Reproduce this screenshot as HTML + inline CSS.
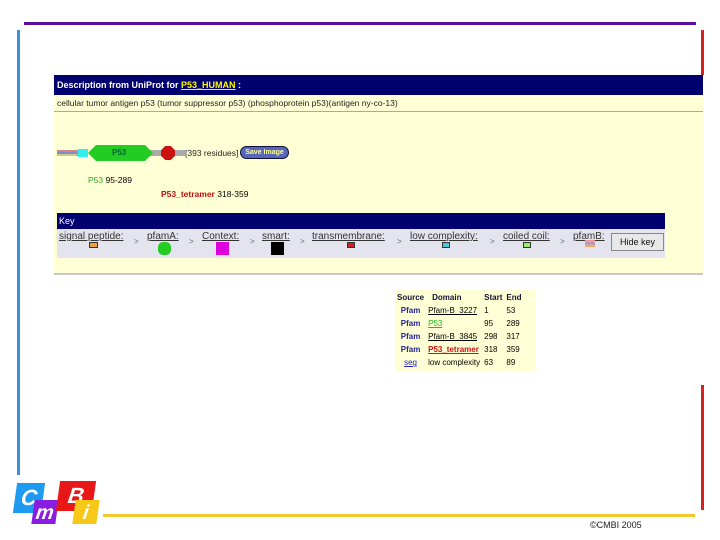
<!DOCTYPE html>
<html><head><style>
body{margin:0;width:720px;height:540px;background:#fff;position:relative;overflow:hidden;font-family:"Liberation Sans",Arial,sans-serif;}
.a{position:absolute}
.t{font-size:9px;white-space:nowrap}
.k{font-size:10px;color:#333;text-decoration:underline;position:absolute;top:231px;white-space:nowrap}
.g{font-size:8px;color:#666;position:absolute;top:237px}
td{font-size:8px;padding:0 2px;height:13px;white-space:nowrap}
</style></head><body>
<div class="a" style="left:24px;top:22px;width:672px;height:3px;background:#5a0fa0"></div>
<div class="a" style="left:17px;top:30px;width:3px;height:445px;background:#3b8fd8"></div>
<div class="a" style="left:701px;top:30px;width:3px;height:480px;background:#d82020"></div>
<div class="a" style="left:54px;top:75px;width:650px;height:310px;background:#fff"></div>
<div class="a" style="left:54px;top:75px;width:649px;height:200px;background:#ffffd6"></div>
<div class="a" style="left:54px;top:273px;width:649px;height:2px;background:#c8c8c8"></div>
<div class="a" style="left:54px;top:75px;width:649px;height:20px;background:#00006e"></div>
<div class="a t" style="left:57px;top:80px;color:#fff;font-weight:bold">Description from UniProt for <span style="color:#ff0;text-decoration:underline">P53_HUMAN</span> :</div>
<div class="a t" style="left:57px;top:98px;color:#222;font-size:8.5px">cellular tumor antigen p53 (tumor suppressor p53) (phosphoprotein p53)(antigen ny-co-13)</div>
<div class="a" style="left:54px;top:111px;width:649px;height:1px;background:#aaa"></div>
<!-- protein -->
<div class="a" style="left:57px;top:150px;width:20px;height:6px;background:linear-gradient(#c88 0,#c88 33%,#88c 33%,#88c 66%,#cc8 66%)"></div>
<div class="a" style="left:77px;top:150px;width:10px;height:6px;background:#999"></div>
<div class="a" style="left:78px;top:149px;width:10px;height:8px;background:#3ee"></div>
<div class="a" style="left:95px;top:150px;width:90px;height:6px;background:#aaa"></div>
<div class="a" style="left:88px;top:145px;width:65px;height:16px;background:#2c2;clip-path:polygon(8px 0,57px 0,100% 50%,57px 100%,8px 100%,0 50%)"></div>
<div class="a t" style="left:112px;top:148px;font-size:8px;font-weight:bold;color:#063">P53</div>
<div class="a" style="left:161px;top:146px;width:14px;height:14px;background:#c11;clip-path:polygon(30% 0,70% 0,100% 30%,100% 70%,70% 100%,30% 100%,0 70%,0 30%)"></div>
<div class="a t" style="left:185px;top:148px;font-size:8.5px;color:#222">[393 residues]</div>
<div class="a" style="left:240px;top:146px;width:47px;height:11px;background:#5566bb;border:1px solid #113;border-radius:7px;color:#ff9;font-size:7px;font-weight:bold;text-align:center;line-height:11px">Save Image</div>
<div class="a t" style="left:88px;top:175px;font-size:8.5px"><span style="color:#2a2">P53</span> 95-289</div>
<div class="a t" style="left:161px;top:189px;font-size:8.5px"><b style="color:#b11">P53_tetramer</b> 318-359</div>
<!-- key -->
<div class="a" style="left:57px;top:213px;width:608px;height:16px;background:#00006e"></div>
<div class="a t" style="left:59px;top:216px;color:#fff">Key</div>
<div class="a" style="left:57px;top:229px;width:608px;height:29px;background:#e4e4ee"></div>
<span class="k" style="left:59px">signal peptide:</span><div class="a" style="left:89px;top:242px;width:7px;height:4px;background:#e8a040;border:1px solid #333"></div>
<span class="g" style="left:134px">&gt;</span>
<span class="k" style="left:147px">pfamA:</span><div class="a" style="left:158px;top:242px;width:13px;height:13px;background:#2c2;border-radius:5px"></div>
<span class="g" style="left:189px">&gt;</span>
<span class="k" style="left:202px">Context:</span><div class="a" style="left:216px;top:242px;width:13px;height:13px;background:#d0d"></div>
<span class="g" style="left:250px">&gt;</span>
<span class="k" style="left:262px">smart:</span><div class="a" style="left:271px;top:242px;width:13px;height:13px;background:#000"></div>
<span class="g" style="left:300px">&gt;</span>
<span class="k" style="left:312px">transmembrane:</span><div class="a" style="left:347px;top:242px;width:6px;height:4px;background:#c22;border:1px solid #333"></div>
<span class="g" style="left:397px">&gt;</span>
<span class="k" style="left:410px">low complexity:</span><div class="a" style="left:442px;top:242px;width:6px;height:4px;background:#4cd;border:1px solid #333"></div>
<span class="g" style="left:490px">&gt;</span>
<span class="k" style="left:503px">coiled coil:</span><div class="a" style="left:523px;top:242px;width:6px;height:4px;background:#9e6;border:1px solid #333"></div>
<span class="g" style="left:560px">&gt;</span>
<span class="k" style="left:573px">pfamB:</span><div class="a" style="left:585px;top:240px;width:10px;height:7px;background:linear-gradient(#e99 0,#e99 33%,#99e 33%,#99e 66%,#ea6 66%)"></div>
<div class="a" style="left:611px;top:233px;width:51px;height:16px;background:#e8e8e8;border:1px solid #888;font-size:9px;text-align:center;line-height:16px;color:#111">Hide key</div>
<!-- table -->
<div class="a" style="left:395px;top:290px;width:141px;height:81px;background:#ffffd6">
<table style="border-collapse:collapse;margin-top:1px">
<tr style="font-weight:bold;color:#113"><td>Source</td><td style="padding:0 6px">Domain</td><td>Start</td><td>End</td></tr>
<tr><td style="color:#229;font-weight:bold;text-align:center">Pfam</td><td style="text-decoration:underline">Pfam-B_3227</td><td>1</td><td>53</td></tr>
<tr><td style="color:#229;font-weight:bold;text-align:center">Pfam</td><td style="text-decoration:underline;color:#2b2">P53</td><td>95</td><td>289</td></tr>
<tr><td style="color:#229;font-weight:bold;text-align:center">Pfam</td><td style="text-decoration:underline">Pfam-B_3845</td><td>298</td><td>317</td></tr>
<tr><td style="color:#229;font-weight:bold;text-align:center">Pfam</td><td style="text-decoration:underline;color:#c11;font-weight:bold">P53_tetramer</td><td>318</td><td>359</td></tr>
<tr><td style="color:#22a;text-decoration:underline;text-align:center">seg</td><td>low complexity</td><td>63</td><td>89</td></tr>
</table></div>
<!-- logo -->
<div class="a" style="left:15px;top:483px;width:28px;height:30px;background:#1e9af0;transform:skewX(-8deg);color:#fff;font:italic bold 22px 'Liberation Sans';text-align:center;line-height:30px">C</div>
<div class="a" style="left:33px;top:500px;width:24px;height:24px;background:#8a1ee0;transform:skewX(-8deg);color:#fff;font:italic bold 20px 'Liberation Sans';text-align:center;line-height:26px">m</div>
<div class="a" style="left:58px;top:481px;width:36px;height:30px;background:#e81818;transform:skewX(-8deg);color:#fff;font:italic bold 22px 'Liberation Sans';text-align:center;line-height:30px">B</div>
<div class="a" style="left:74px;top:500px;width:24px;height:24px;background:#f8c818;transform:skewX(-8deg);color:#fff;font:italic bold 20px 'Liberation Sans';text-align:center;line-height:26px">i</div>
<div class="a" style="left:103px;top:514px;width:592px;height:3px;background:#f0c830"></div>
<div class="a" style="left:590px;top:520px;font:9px 'Liberation Sans';color:#222">©CMBI 2005</div>
</body></html>
